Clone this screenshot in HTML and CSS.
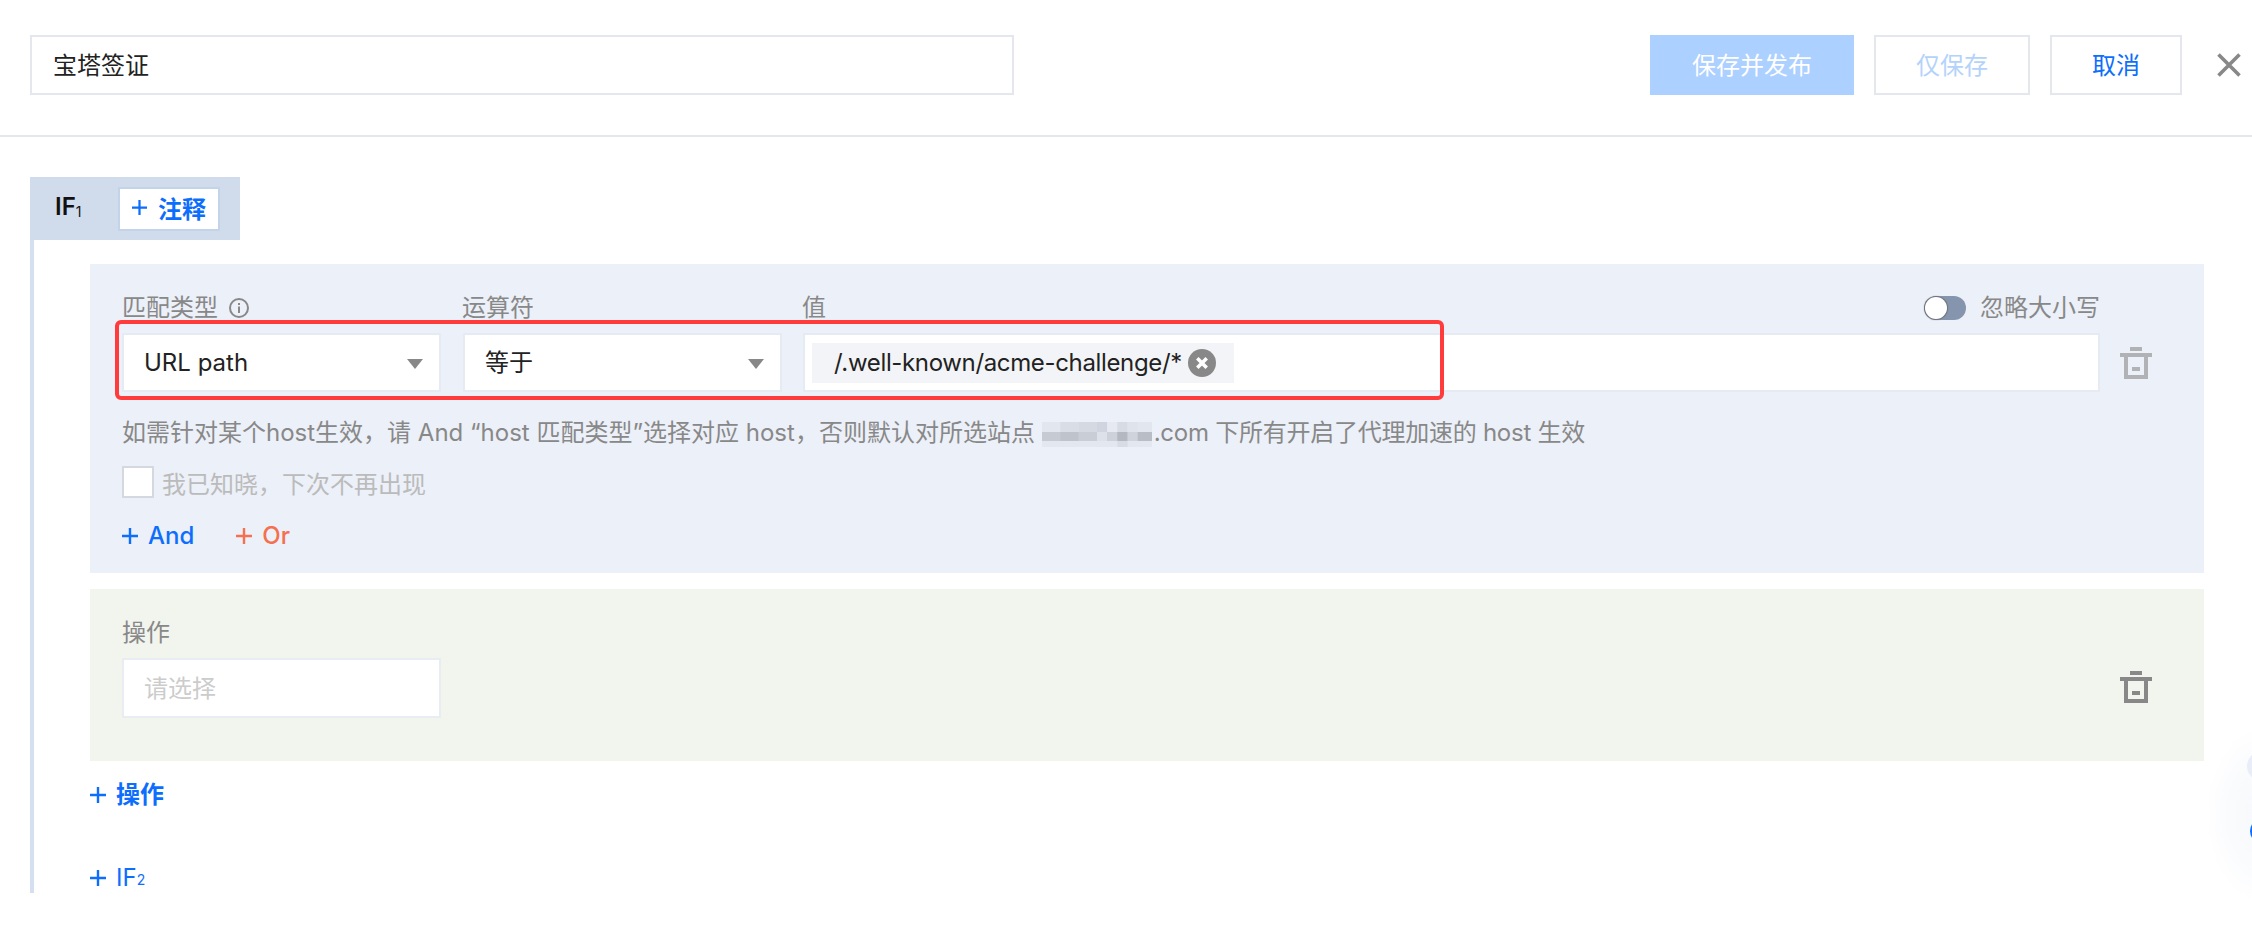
FILE: index.html
```html
<!DOCTYPE html>
<html lang="zh">
<head>
<meta charset="utf-8">
<title>宝塔签证</title>
<link rel="stylesheet" href="styles.css">
</head>
<body>
<div class="page">
  <header class="top">
    <div class="title-input">宝塔签证</div>
    <div class="actions">
      <button class="btn btn-primary">保存并发布</button>
      <button class="btn btn-disabled">仅保存</button>
      <button class="btn btn-cancel">取消</button>
      <svg class="close" viewBox="0 0 24 24" width="24" height="24"><path d="M1.5 1.5 22.5 22.5M22.5 1.5 1.5 22.5" fill="none" stroke="#888" stroke-width="3.6"/></svg>
    </div>
  </header>

  <section class="rule">
    <div class="if-head">
      <span class="if-name">IF<sub>1</sub></span>
      <button class="note-btn"><svg class="plus" viewBox="0 0 16 16" width="15" height="15"><use href="#plus-shape"/></svg>注释</button>
    </div>
    <div class="rule-body">
      <div class="panel panel-cond">
        <div class="red-box"></div>
        <div class="label-row">
          <div class="label label-type">匹配类型
            <svg class="info" viewBox="0 0 20 20" width="20" height="20"><circle cx="10" cy="10" r="9" fill="none" stroke="#888" stroke-width="2"/><rect x="9" y="8.5" width="2" height="6.5" fill="#888"/><rect x="9" y="5" width="2" height="2" fill="#888"/></svg>
          </div>
          <div class="label label-op">运算符</div>
          <div class="label label-val">值</div>
          <div class="case-toggle">
            <span class="toggle"><span class="knob"></span></span>
            <span>忽略大小写</span>
          </div>
        </div>
        <div class="field-row">
          <div class="field field-sel">URL path<i class="arrow"></i></div>
          <div class="field field-sel">等于<i class="arrow"></i></div>
          <div class="field field-val">
            <span class="tag"><span class="tag-text">/.well-known/acme-challenge/*</span>
              <svg class="tag-x" viewBox="0 0 28 28" width="28" height="28"><circle cx="14" cy="14" r="14" fill="#888"/><path d="M9.3 9.3 18.7 18.7M18.7 9.3 9.3 18.7" stroke="#fff" stroke-width="3.6" fill="none"/></svg>
            </span>
          </div>
          <svg class="trash trash-light" viewBox="0 0 32 32" width="32" height="32"><use href="#trash-shape"/></svg>
        </div>
        <p class="hint">如需针对某个host生效，请 And “host 匹配类型”选择对应 host，否则默认对所选站点 <svg class="mosaic" viewBox="0 0 108 25" width="110" height="25" preserveAspectRatio="none">
            <rect y="0" width="108" height="10" fill="#e2e6ee"/>
            <rect x="18" y="0" width="18" height="10" fill="#d9dde6"/>
            <rect x="36" y="0" width="18" height="10" fill="#d5d9e2"/>
            <rect x="54" y="0" width="10" height="10" fill="#d0d4de"/>
            <rect x="64" y="0" width="10" height="10" fill="#e6e9f1"/>
            <rect x="74" y="0" width="10" height="10" fill="#d7dbe4"/>
            <rect x="84" y="0" width="10" height="10" fill="#dfe3eb"/>
            <rect y="10" width="108" height="9" fill="#c6cad3"/>
            <rect x="18" y="10" width="18" height="9" fill="#bfc3cc"/>
            <rect x="36" y="10" width="18" height="9" fill="#c9cdd6"/>
            <rect x="54" y="10" width="10" height="9" fill="#dde1e9"/>
            <rect x="64" y="10" width="10" height="9" fill="#cdd1da"/>
            <rect x="74" y="10" width="10" height="9" fill="#b4b8c1"/>
            <rect x="84" y="10" width="10" height="9" fill="#cfd3dc"/>
            <rect x="94" y="10" width="14" height="9" fill="#b9bdc6"/>
            <rect y="19" width="108" height="6" fill="#e3e7ef"/>
            <rect x="74" y="19" width="10" height="6" fill="#d8dce5"/>
          </svg><span class="hint-tail">.com 下所有开启了代理加速的 host 生效</span></p>
        <div class="check-row">
          <span class="checkbox"></span>
          <span class="check-text">我已知晓，下次不再出现</span>
        </div>
        <div class="link-row">
          <a class="link link-blue"><svg class="plus" viewBox="0 0 16 16" width="16" height="16"><use href="#plus-shape"/></svg>And</a>
          <a class="link link-or"><svg class="plus" viewBox="0 0 16 16" width="16" height="16"><use href="#plus-shape"/></svg>Or</a>
        </div>
      </div>

      <div class="panel panel-act">
        <div class="act-main">
          <div class="label">操作</div>
          <div class="field field-act">请选择</div>
        </div>
        <svg class="trash trash-dark" viewBox="0 0 32 32" width="32" height="32"><use href="#trash-shape"/></svg>
      </div>

      <a class="link link-blue link-strong add-act"><svg class="plus" viewBox="0 0 16 16" width="16" height="16"><use href="#plus-shape"/></svg>操作</a>
      <a class="link link-blue add-if"><svg class="plus" viewBox="0 0 16 16" width="16" height="16"><use href="#plus-shape"/></svg>IF<sub>2</sub></a>
    </div>
  </section>
  <div class="floater"><span class="dot dot-pale"></span><span class="dot dot-blue"></span></div>
</div>
<svg class="defs" width="0" height="0"><defs>
  <g id="trash-shape" fill="currentColor">
    <rect x="10" y="0" width="12" height="4"/>
    <rect x="0" y="6" width="32" height="4"/>
    <path d="M4 10H8V28H24V10H28V32H4Z"/>
    <rect x="12" y="20" width="8" height="4"/>
  </g>
  <path id="plus-shape" d="M0 6.8H6.8V0H9.2V6.8H16V9.2H9.2V16H6.8V9.2H0Z" fill="currentColor"/>
</defs></svg>
</body>
</html>
```
FILE: styles.css
```css
* { box-sizing: border-box; }
html, body { margin: 0; padding: 0; background: #fff; }
body {
  font-family: Inter, "Noto Sans CJK SC", sans-serif;
  font-size: 24px;
  color: #888;
  width: 2252px;
  height: 952px;
  overflow: hidden;
}
.page { position: relative; width: 2252px; height: 952px; overflow: hidden; }
.top {
  display: flex;
  align-items: flex-start;
  height: 137px;
  padding: 35px 11px 0 30px;
  border-bottom: 2px solid #e4e8ee;
}
.title-input {
  width: 984px;
  height: 60px;
  border: 2px solid #e4e8ee;
  padding-left: 21px;
  line-height: 57px;
  color: #222;
}
.actions { display: flex; align-items: center; margin-left: auto; gap: 20px; height: 60px; }
.btn {
  height: 60px;
  padding: 0 0 3px;
  font: inherit;
  background: #fff;
  border: 2px solid #e4e8ee;
}
.btn-primary { width: 204px; background: #acd0ff; border: 0; color: #fff; }
.btn-disabled { width: 156px; color: #b4d3fb; }
.btn-cancel { width: 132px; color: #0d6efd; }
.close { margin-left: 15px; }
.rule { margin: 40px 48px 0 30px; }
.if-head {
  display: flex;
  align-items: center;
  width: 210px;
  height: 63px;
  padding: 0 0 0 25px;
  background: #d0dceb;
  color: #111;
}
.if-name { width: 63px; font-weight: 600; line-height: 32px; }
sub { font-size: 14px; font-weight: 400; vertical-align: baseline; position: relative; top: 2px; }
.note-btn {
  display: flex;
  align-items: center;
  justify-content: center;
  width: 102px;
  height: 44px;
  padding: 0 0 2px;
  background: #fff;
  border: 2px solid #c3d3ea;
  color: #0d6efd;
  font: inherit;
  font-weight: 700;
}
.plus { margin-right: 11px; flex: none; }
.rule-body {
  height: 653px;
  padding: 24px 0 0 56px;
  border-left: 4px solid #d4dff0;
}
.panel { position: relative; }
.panel-cond { height: 309px; padding: 28px 0 0 32px; background: #ecf0f8; }
.red-box {
  position: absolute;
  left: 25px;
  top: 56px;
  width: 1329px;
  height: 80px;
  border: 4px solid #ff3b3b;
  border-radius: 6px;
}
.label-row {
  display: flex;
  align-items: flex-start;
  height: 41px;
  line-height: 32px;
}
.label { line-height: 32px; }
.label-type { display: flex; align-items: center; width: 340px; gap: 11px; }
.label-op { width: 340px; }
.label-val { flex: none; }
.info { flex: none; }
.case-toggle {
  display: flex;
  align-items: center;
  margin-left: auto;
  margin-right: 104px;
  gap: 14px;
  height: 32px;
}
.toggle {
  display: block;
  position: relative;
  width: 42px;
  height: 24px;
  border-radius: 12px;
  background: #8595ae;
}
.knob {
  position: absolute;
  left: 1px;
  top: 1px;
  width: 22px;
  height: 22px;
  border-radius: 50%;
  background: #fff;
  box-shadow: 0 0 1px 1px #6d7078;
}
.field-row { display: flex; align-items: center; height: 59px; }
.field {
  height: 59px;
  background: #fff;
  border: 2px solid #e6eaf2;
  padding-left: 20px;
  line-height: 56px;
  color: #222;
}
.field-sel { position: relative; width: 319px; margin-right: 22px; }
.arrow {
  position: absolute;
  right: 16px;
  top: 24px;
  width: 0;
  height: 0;
  border-left: 8px solid transparent;
  border-right: 8px solid transparent;
  border-top: 10px solid #888;
}
.field-val {
  display: flex;
  align-items: center;
  width: 1297px;
  padding-left: 7px;
  margin-left: -1px;
}
.tag {
  display: flex;
  align-items: center;
  width: 422px;
  height: 40px;
  padding-left: 22px;
  background: #f3f4f7;
  line-height: 40px;
  white-space: nowrap;
}
.tag-text { width: 354px; flex: none; letter-spacing: -0.35px; }
.tag-x { flex: none; }
.trash { flex: none; margin-left: 20px; }
.trash-light { color: #b0b2b6; }
.trash-dark { color: #888; margin: 55px 0 0 0; }
.hint {
  margin: 24px 0 0;
  height: 34px;
  line-height: 34px;
  white-space: nowrap;
}
.hint-tail { margin-left: 2px; letter-spacing: -0.25px; }
.mosaic { vertical-align: middle; margin: 0; }
.check-row { display: flex; align-items: center; margin-top: 16px; height: 32px; gap: 8px; }
.checkbox {
  width: 32px;
  height: 32px;
  background: #fff;
  border: 2px solid #d5d8de;
}
.check-text { color: #bbb; }
.link-row { display: flex; margin-top: 22px; gap: 42px; line-height: 32px; font-weight: 500; }
.link { display: flex; align-items: center; }
.link-blue { color: #0d6efd; }
.link-or { color: #f4704f; }
.panel-act {
  display: flex;
  justify-content: space-between;
  align-items: flex-start;
  height: 172px;
  margin-top: 16px;
  padding: 28px 52px 0 32px;
  background: #f2f4ee;
}
.field-act { width: 319px; height: 60px; margin-top: 9px; color: #ccc; border-color: #e9ecf3; line-height: 58px; }
.trash-dark { margin-top: 54px; }
.add-act { margin-top: 18px; line-height: 32px; font-weight: 700; }
.add-if { margin-top: 51px; line-height: 32px; }
.link .plus { margin-right: 10px; }
.floater {
  position: absolute;
  left: 2205px;
  top: 725px;
  width: 120px;
  height: 180px;
  border-radius: 60px;
  background: radial-gradient(closest-side, #f6f8fb 0%, #fafbfd 60%, #fff 100%);
}
.dot { position: absolute; display: block; border-radius: 50%; }
.dot-pale { left: 42px; top: 26px; width: 30px; height: 30px; background: #e9edf8; }
.dot-blue { left: 45px; top: 94px; width: 24px; height: 24px; background: #0d6efd; }
.defs { position: absolute; }
```
